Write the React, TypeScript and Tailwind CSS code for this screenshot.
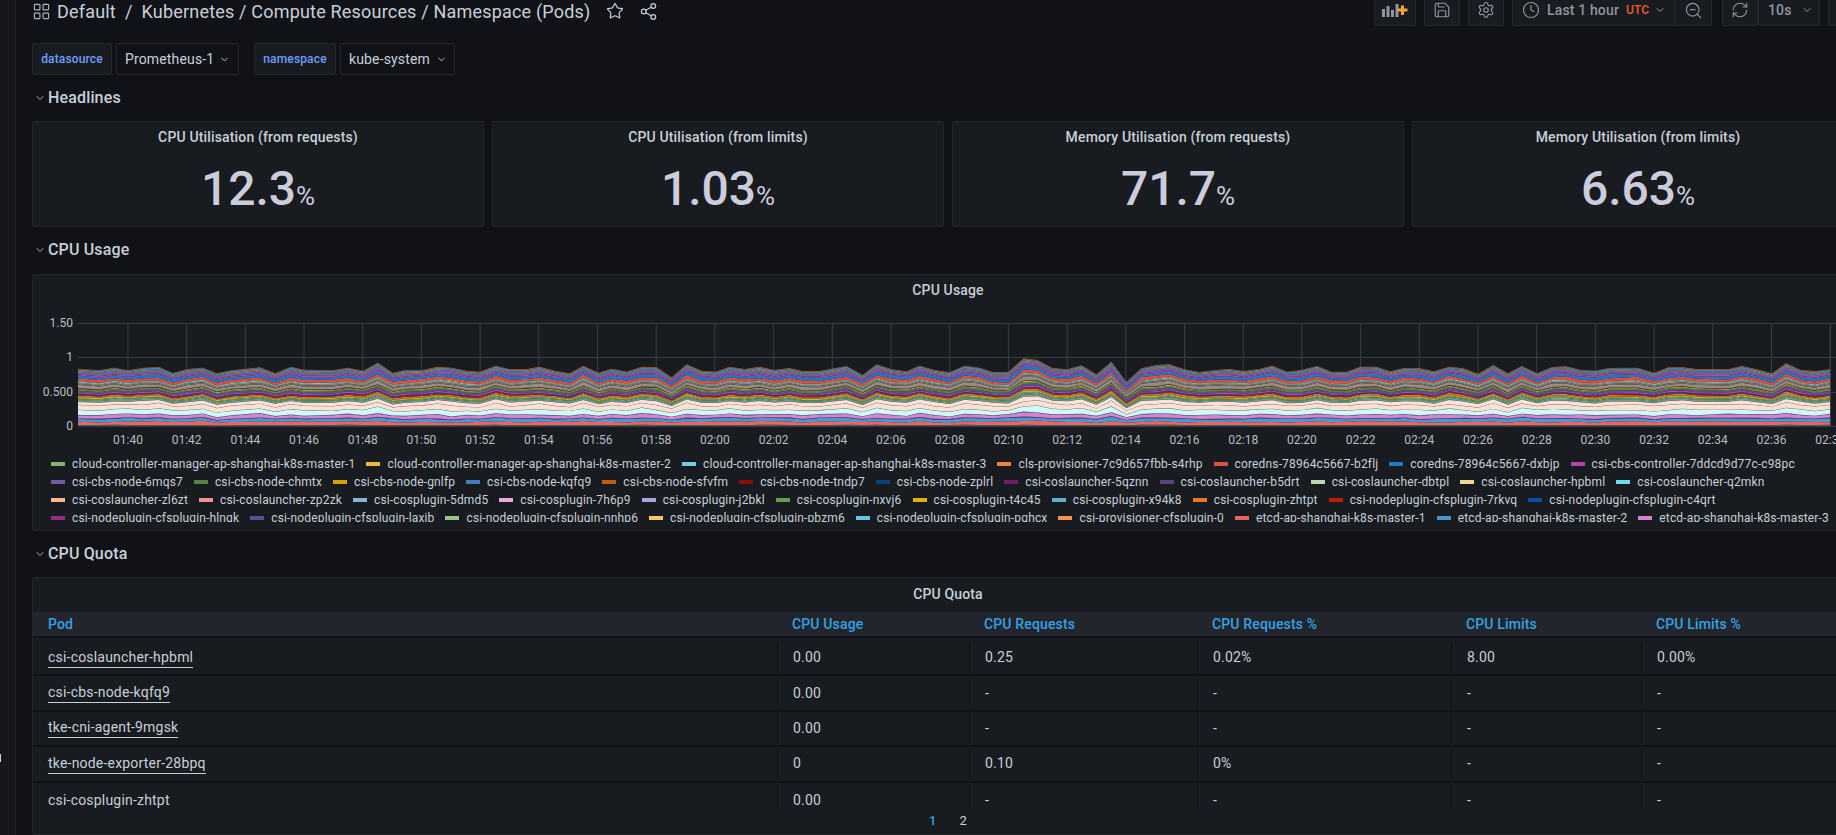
import React from "react";
import { ChevronDown, Clock, LayoutGrid, RefreshCw, Save, Settings, Share2, Star, ZoomOut } from "lucide-react";

const TOP: [number, number][] = [
  [78,368.7],[99.5,370.3],[114,367.7],[128,370.3],[143.5,367.7],[159,367],[173,373],[187.5,369],[203,367.7],[217,373.3],[231.5,370.3],[260,367.3],[275.5,373.3],[291,366.7],[304,369.7],[333,370.3],[348,367.7],[363.5,370.7],[378,362.7],[393,372.7],[405.7,370],[423,370],[438,366.7],[451.6,367.7],[467,370.7],[480,371.7],[496,365.7],[511,369.3],[526,369.3],[539.6,366.7],[555,370.7],[570,373.3],[583.6,365.7],
  [599,372.7],[612,368.7],[627,371.7],[642,366.7],[657,367.3],[672,377.3],[687,364.3],[702,370.7],[716,371.7],[730,366.7],[745,369],[760,366.7],[775,370],[790,368],[803,371],[820,371],[847,366],[863,375],[877,364.3],[892,369.3],[907,371.3],[920,365.7],[935,370],[950,372.3],[965,365.8],[980,367.7],
  [994,372.3],[1009,371.7],[1024,358.3],[1038,360],[1053,368],[1068,369.3],[1082,365.3],[1097,374.3],[1112,361.7],[1127,381.7],[1142,368.3],[1157,365],[1170,364.3],[1185,369.3],[1200,372],[1217,370],[1230,369],[1245,371],[1260,369],[1273,365.7],[1288,371.7],
  [1302,370],[1318,366],[1332,371.7],[1347.5,371.7],[1361,366.7],[1377,366.7],[1391,371.3],[1405,368],[1420.6,368.3],[1434.5,371.3],[1450,366.7],[1464,368.3],[1479,373.7],[1494,365],[1508.7,373.3],[1522.6,366],[1538,373.3],[1553,367],[1567,366.3],[1580.7,369.7],[1596,370.7],[1610,368],[1638,367.7],[1655,372.7],[1669.5,367.3],[1683.5,367.3],[1697.4,369],[1729,369.3],[1742.6,366],[1758,369.3],[1773,373.3],[1787,363.3],[1802,370],[1816,371],[1831,369.3],
];

const LOWER: [string, number][] = [
  ["#3d5a58",0.9],["#EA6460",3.2],["#5195CE",3.2],["#4d4a86",0.6],["#D683CE",3.2],["#806EB7",0.5],["#CFFAFF",4.6],["#b9c4c4",0.25],["#F9E2D2",4.6],["#d4bfb4",0.25],["#FCE2DE",3.4],["#b8c0b0",0.3],
];
const UPPER: [string, number][] = [
  ["#7f9a78",1.3],["#64B0C8",0.7],["#629E51",1],["#E5AC0E",1],["#64B0C8",0.5],["#E0752D",1],["#BF1B00",0.8],["#0A50A1",0.7],["#BA43A9",1.1],["#614D93",1.6],["#508642",1.3],["#EAB839",0.6],["#4a4038",0.7],["#9a8a80",2.6],["#6a7a70",1],["#8e8078",1.2],["#6ED0E0",0.8],["#EF843C",0.6],["#E24D42",2.2],["#1F78C1",2.6],["#BA43A9",1.1],["#705DA0",2.6],["#CCA300",0.6],["#447EBC",1.5],["#C15C17",0.6],
];

function noise(a: number, b: number) {
  const v = Math.sin(a * 12.9898 + b * 78.233) * 43758.5453;
  return v - Math.floor(v);
}

function buildBands() {
  const sets = TOP.map(([, y], i) => {
    const total = 426 - y;
    const lowerH = 24 + 0.55 * (total - 56) + (noise(i, 3) - 0.5) * 1.6;
    const upperH = total - lowerH;
    const layer = (bands: [string, number][], h: number, seed: number) => {
      const t = bands.map(([, w], k) => w * (1 + (noise(i, k + seed) - 0.5) * 0.45));
      const s = t.reduce((a, b) => a + b, 0);
      return t.map((w) => (w / s) * h);
    };
    return [...layer(LOWER, lowerH, 10), ...layer(UPPER, upperH, 50)];
  });
  const all = [...LOWER, ...UPPER];
  const paths: { d: string; fill: string }[] = [];
  const below = TOP.map(() => 426);
  all.forEach(([fill], k) => {
    const above = below.map((b, i) => b - sets[i][k]);
    const up = TOP.map(([x], i) => `${x},${above[i].toFixed(2)}`);
    const down = TOP.map(([x], i) => `${x},${below[i].toFixed(2)}`).reverse();
    paths.push({ d: `M${up.join("L")}L${down.join("L")}Z`, fill });
    above.forEach((v, i) => (below[i] = v));
  });
  return paths;
}

const LEGEND: [string, string][][] = [
  [["#7EB26D","cloud-controller-manager-ap-shanghai-k8s-master-1"],["#EAB839","cloud-controller-manager-ap-shanghai-k8s-master-2"],["#6ED0E0","cloud-controller-manager-ap-shanghai-k8s-master-3"],["#EF843C","cls-provisioner-7c9d657fbb-s4rhp"],["#E24D42","coredns-78964c5667-b2flj"],["#1F78C1","coredns-78964c5667-dxbjp"],["#BA43A9","csi-cbs-controller-7ddcd9d77c-c98pc"]],
  [["#705DA0","csi-cbs-node-6mqs7"],["#508642","csi-cbs-node-chmtx"],["#CCA300","csi-cbs-node-gnlfp"],["#447EBC","csi-cbs-node-kqfq9"],["#C15C17","csi-cbs-node-sfvfm"],["#890F02","csi-cbs-node-tndp7"],["#0A437C","csi-cbs-node-zplrl"],["#6D1F62","csi-coslauncher-5qznn"],["#584477","csi-coslauncher-b5drt"],["#B7DBAB","csi-coslauncher-dbtpl"],["#F4D598","csi-coslauncher-hpbml"],["#70DBED","csi-coslauncher-q2mkn"]],
  [["#F9BA8F","csi-coslauncher-zl6zt"],["#F29191","csi-coslauncher-zp2zk"],["#82B5D8","csi-cosplugin-5dmd5"],["#E5A8E2","csi-cosplugin-7h6p9"],["#AEA2E0","csi-cosplugin-j2bkl"],["#629E51","csi-cosplugin-nxvj6"],["#E5AC0E","csi-cosplugin-t4c45"],["#64B0C8","csi-cosplugin-x94k8"],["#E0752D","csi-cosplugin-zhtpt"],["#BF1B00","csi-nodeplugin-cfsplugin-7rkvq"],["#0A50A1","csi-nodeplugin-cfsplugin-c4qrt"]],
  [["#962D82","csi-nodeplugin-cfsplugin-hlnqk"],["#614D93","csi-nodeplugin-cfsplugin-laxjb"],["#9AC48A","csi-nodeplugin-cfsplugin-nnhp6"],["#F2C96D","csi-nodeplugin-cfsplugin-pbzm6"],["#65C5DB","csi-nodeplugin-cfsplugin-pqhcx"],["#F9934E","csi-provisioner-cfsplugin-0"],["#EA6460","etcd-ap-shanghai-k8s-master-1"],["#5195CE","etcd-ap-shanghai-k8s-master-2"],["#D683CE","etcd-ap-shanghai-k8s-master-3"]],
];

const TICKS = Array.from({ length: 30 }, (_, i) => {
  const m = 100 + i * 2;
  const h = Math.floor(m / 60);
  const mm = m % 60;
  return { x: 128 + i * 58.73, label: `0${h}:${mm < 10 ? "0" : ""}${mm}` };
});

const ROWS = [
  { pod: "csi-coslauncher-hpbml", link: true, v: ["0.00", "0.25", "0.02%", "8.00", "0.00%"] },
  { pod: "csi-cbs-node-kqfq9", link: true, v: ["0.00", "-", "-", "-", "-"] },
  { pod: "tke-cni-agent-9mgsk", link: true, v: ["0.00", "-", "-", "-", "-"] },
  { pod: "tke-node-exporter-28bpq", link: true, v: ["0", "0.10", "0%", "-", "-"] },
  { pod: "csi-cosplugin-zhtpt", link: false, v: ["0.00", "-", "-", "-", "-"] },
];
const COLS = ["CPU Usage", "CPU Requests", "CPU Requests %", "CPU Limits", "CPU Limits %"];
const STATS = [
  ["CPU Utilisation (from requests)", "12.3"],
  ["CPU Utilisation (from limits)", "1.03"],
  ["Memory Utilisation (from requests)", "71.7"],
  ["Memory Utilisation (from limits)", "6.63"],
];

function Chart() {
  const bands = buildBands();
  return (
    <svg viewBox="33 305 1831 148" width={1830} height={148} className="block shrink-0 tracking-normal">
      {[323, 357, 392, 426].map((y) => (
        <line key={y} x1={78} x2={1864} y1={y + 0.5} y2={y + 0.5} stroke="#3b3d42" />
      ))}
      {TICKS.map((t) => (
        <line key={t.x} x1={t.x} x2={t.x} y1={323} y2={426} stroke="#3b3d42" />
      ))}
      <line x1={1831.5} x2={1831.5} y1={323} y2={426} stroke="#3b3d42" />
      {bands.map((b, i) => (
        <path key={i} d={b.d} fill={b.fill} />
      ))}
      {[["1.50", 323], ["1", 357], ["0.500", 392], ["0", 426]].map(([l, y]) => (
        <text key={l} x={73} y={(y as number) + 4} textAnchor="end" fontSize={12} fill="#b9bcc2" fontFamily="Roboto, sans-serif">{l}</text>
      ))}
      {TICKS.map((t) => (
        <text key={t.label} x={t.x} y={444} textAnchor="middle" fontSize={12} fill="#b9bcc2" fontFamily="Roboto, sans-serif">{t.label}</text>
      ))}
    </svg>
  );
}

function SectionHeader({ title }: { title: string }) {
  return (
    <div className="flex h-6 items-center pl-[18px] text-[#c7d0d9]">
      <ChevronDown size={12} strokeWidth={2} className="mr-[2px] text-[#aab2bc]" />
      <span className="text-[16px] font-medium">{title}</span>
    </div>
  );
}

function IconBtn({ w, children, className = "" }: { w: string; children: React.ReactNode; className?: string }) {
  return (
    <div className={`flex h-8 items-center justify-center rounded-[2px] border border-[#24272c] bg-[#181b1f] text-[#8f959e] ${w} ${className}`}>
      {children}
    </div>
  );
}

export default function App() {
  return (
    <div className="relative flex h-[835px] w-[1836px] overflow-hidden bg-[#111217] tracking-[0.15px] text-[#c7d0d9] [font-family:Roboto,sans-serif]">
      <div className="relative w-4 shrink-0 border-r border-[#1f2126] bg-[#15171b]">
        <div className="absolute left-0 top-[754px] h-2 w-[1px] bg-[#c7d0d9]" />
      </div>
      <div className="w-[1848px] shrink-0">
        <div className="-mt-[6px] flex h-8 items-center pl-[16px]">
          <LayoutGrid size={19} strokeWidth={1.5} className="mt-[2px] text-[#aab2bc]" />
          <div className="mt-[2px] flex items-center text-[18px] tracking-[0.19px] text-[#c7d0d9]">
            <span className="ml-[6px]">Default</span>
            <span className="mx-[9px]">/</span>
            <span>Kubernetes / Compute Resources / Namespace (Pods)</span>
          </div>
          <Star size={18} strokeWidth={1.6} className="ml-[15px] mt-[2px] text-[#c7d0d9]" />
          <Share2 size={19} strokeWidth={1.5} className="ml-[15px] mt-[2px] text-[#c7d0d9]" />
          <div className="ml-auto flex items-center">
            <IconBtn w="w-[42px]">
              <svg width="26" height="14" viewBox="0 0 26 14">
                <rect x="0" y="6" width="3" height="8" fill="#8f959e" />
                <rect x="4.5" y="3" width="3" height="11" fill="#8f959e" />
                <rect x="9" y="7" width="3" height="7" fill="#8f959e" />
                <rect x="13.500" y="1" width="3" height="13" fill="#8f959e" />
                <path d="M19 2.500h3v3h3.500v3H22v3.500h-3V8.500h-3.500v-3H19z" fill="#f6a72b" />
              </svg>
            </IconBtn>
            <IconBtn w="w-9" className="ml-2"><Save size={18} strokeWidth={1.6} /></IconBtn>
            <IconBtn w="w-9" className="ml-2"><Settings size={18} strokeWidth={1.6} /></IconBtn>
            <div className="ml-2 flex h-8 w-[163px] items-center rounded-l-[2px] border border-[#24272c] bg-[#181b1f] pl-[9px] text-[14px] font-medium text-[#8f959e]">
              <Clock size={18} strokeWidth={1.6} />
              <span className="ml-[7px]">Last 1 hour</span>
              <span className="ml-[7px] text-[12px] text-[#ef5a28]">UTC</span>
              <ChevronDown size={12} strokeWidth={2} className="ml-[5px]" />
            </div>
            <IconBtn w="w-[37px]" className="rounded-l-none border-l-0"><ZoomOut size={19} strokeWidth={1.5} /></IconBtn>
            <IconBtn w="w-9" className="ml-[10px]"><RefreshCw size={18} strokeWidth={1.5} /></IconBtn>
            <div className="flex h-8 w-[62px] items-center rounded-[2px] border border-[#24272c] bg-[#181b1f] pl-[9px] text-[14px] font-medium text-[#8f959e]">
              10s
              <ChevronDown size={12} strokeWidth={2} className="ml-[9px]" />
            </div>
            <IconBtn w="w-9" className="ml-2">{null}</IconBtn>
          </div>
        </div>

        <div className="mt-[17px] flex h-8 pl-4">
          <div className="flex w-[80px] items-center justify-center rounded-[2px] border border-[#24272c] bg-[#181b1f] text-[12px] font-medium text-[#6e9fff]">datasource</div>
          <div className="ml-1 flex w-[123px] items-center rounded-[2px] border border-[#24272c] pl-2 text-[14px] text-[#c7d0d9]">
            Prometheus-1
            <ChevronDown size={11} strokeWidth={2} className="ml-[5px]" />
          </div>
          <div className="ml-[15px] flex w-[82px] items-center justify-center rounded-[2px] border border-[#24272c] bg-[#181b1f] text-[12px] font-medium text-[#6e9fff]">namespace</div>
          <div className="ml-1 flex w-[115px] items-center rounded-[2px] border border-[#24272c] pl-2 text-[14px] text-[#c7d0d9]">
            kube-system
            <ChevronDown size={11} strokeWidth={2} className="ml-[6px]" />
          </div>
        </div>

        <div className="mt-[11px]"><SectionHeader title="Headlines" /></div>
        <div className="ml-4 mt-[11px] grid h-[106px] w-[1832px] grid-cols-4 gap-2">
          {STATS.map(([title, value]) => (
            <div key={title} className="flex flex-col items-center rounded-[2px] border border-[#22252a] bg-[#181b1f] pt-[5px]">
              <div className="text-[14px] font-medium leading-5 text-[#c7d0d9]">{title}</div>
              <div className="mt-[14px] flex items-baseline leading-[56px] tracking-normal text-[#ccccdc]">
                <span className="text-[48px] font-medium">{value}</span>
                <span className="text-[26px] font-normal">%</span>
              </div>
            </div>
          ))}
        </div>

        <div className="mt-[11px]"><SectionHeader title="CPU Usage" /></div>
        <div className="ml-4 mt-[12px] flex h-[257px] w-[1832px] flex-col overflow-hidden rounded-[2px] border border-[#22252a] bg-[#181b1f]">
          <div className="flex h-[30px] shrink-0 items-center justify-center text-[14px] font-medium text-[#c7d0d9]">CPU Usage</div>
          <Chart />
          <div className="mt-[2px] h-[67px] overflow-hidden pl-[18px]">
            {LEGEND.map((row, r) => (
              <div key={r} className="flex h-[18px] items-center whitespace-nowrap text-[12px] text-[#c7d0d9]">
                {row.map(([c, name]) => (
                  <div key={name} className="mr-[11px] flex items-center">
                    <span className="mr-[7px] h-[4px] w-[14px]" style={{ backgroundColor: c }} />
                    {name}
                  </div>
                ))}
              </div>
            ))}
          </div>
        </div>

        <div className="mt-[11px]"><SectionHeader title="CPU Quota" /></div>
        <div className="ml-4 mt-[11px] h-[258px] w-[1832px] overflow-hidden rounded-[2px] border border-[#22252a] bg-[#181b1f]">
          <div className="flex h-[32px] items-center justify-center text-[14px] font-medium text-[#c7d0d9]">CPU Quota</div>
          <div className="mt-[2px] grid h-[26px] grid-cols-[744px_192px_228px_254px_190px_222px] border-b-2 border-[#111217] bg-[#22252b] text-[14px] font-medium leading-6 text-[#33a2e5]">
            <div className="pl-[15px]">Pod</div>
            {COLS.map((c) => (
              <div key={c} className="pl-[15px]">{c}</div>
            ))}
          </div>
          <div className="h-[170px] overflow-hidden tracking-[0.2px]">
            {ROWS.map((row, r) => (
              <div key={r} className={`grid h-[35.4px] grid-cols-[744px_192px_228px_254px_190px_222px] border-[#111217] text-[14px] text-[#c7d0d9] ${r === 4 ? "" : "border-b-2"} ${r === 0 ? "mt-[3px]" : ""}`}>
                <div className="flex items-center pl-[15px]">
                  {row.link ? <span className="border-b border-[#c7d0d9] leading-[19px]">{row.pod}</span> : row.pod}
                </div>
                {row.v.map((v, i) => (
                  <div key={i} className="my-[1px] flex items-center border-l border-[#111217] pl-[15px]">{v}</div>
                ))}
              </div>
            ))}
          </div>
          <div className="flex h-[26px] items-center justify-center gap-[23px] text-[13px]">
            <span className="font-medium text-[#33a2e5]">1</span>
            <span className="text-[#c7d0d9]">2</span>
          </div>
        </div>
      </div>
    </div>
  );
}
